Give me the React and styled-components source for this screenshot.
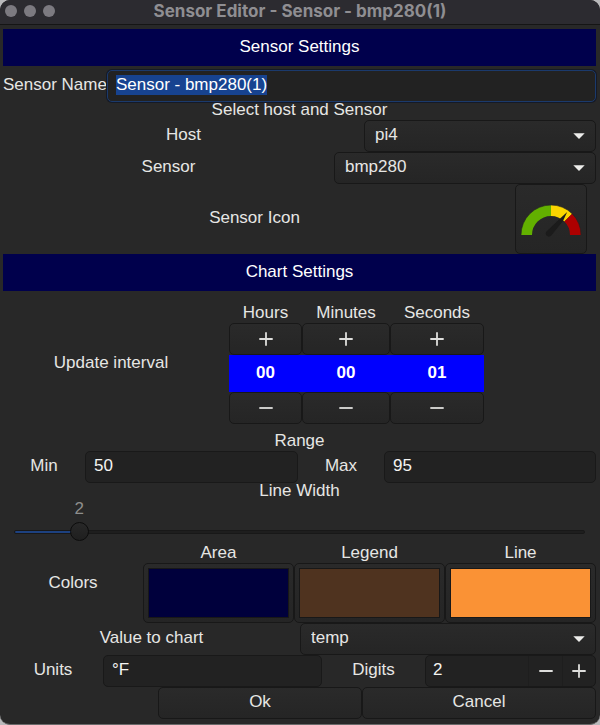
import React, { useEffect, useRef, useState } from "react";
import styled, { createGlobalStyle, css } from "styled-components";

const GlobalStyle = createGlobalStyle`
  *, *::before, *::after { box-sizing: border-box; }
  body { margin: 0; background: #b9b9bb; }
  body, button, input, select, output {
    font-family: "Liberation Sans", Arial, Helvetica, sans-serif;
    font-size: 17px;
    line-height: 18px;
    color: #e6e6e4;
  }
`;

const Window = styled.main`
  display: flex;
  flex-direction: column;
  min-height: 100vh;
  overflow: hidden;
  border-radius: 10px;
  border-bottom: 1px solid #6a6a6a;
  background: #282828;
`;

const TitleBar = styled.header`
  display: grid;
  grid-template-columns: 1fr auto 1fr;
  align-items: center;
  height: 25px;
  padding: 0 5px 3px;
  border-bottom: 1px solid #151515;
  background: #2c2b30;
`;

const Lights = styled.div`
  display: flex;
  gap: 7px;
`;

const Light = styled.button`
  width: 12px;
  height: 12px;
  padding: 0;
  border: 0;
  border-radius: 50%;
  background: #7c7a80;
`;

const Title = styled.h1`
  margin: 0;
  font-family: Inter, sans-serif;
  font-size: 17px;
  font-weight: 700;
  line-height: 20px;
  white-space: nowrap;
  color: #8f8e92;
`;

const Form = styled.form`
  display: flex;
  flex-direction: column;
  padding: 4px 4px 4px 3px;
`;

const Banner = styled.h2`
  margin: 0;
  padding: 9px 0 10px;
  text-align: center;
  font-size: 17px;
  font-weight: 400;
  line-height: 18px;
  color: #fff;
  background: #00004c;
`;

const Row = styled.div`
  display: grid;
  grid-template-columns: ${(p) => p.$columns};
  align-items: center;
  margin-top: ${(p) => p.$gap || 0}px;
`;

const labelText = css`
  padding-bottom: 2px;
  text-align: center;
  white-space: nowrap;
`;

const Label = styled.label`
  ${labelText}
`;

const Caption = styled.div`
  ${labelText}
  line-height: 16px;
  margin-top: ${(p) => p.$gap || 0}px;
`;

const raised = css`
  border: 1px solid #181818;
  border-radius: 5px;
  background: linear-gradient(#2a2a2a, #252525);
`;

const Entry = styled.input`
  width: 100%;
  min-width: 0;
  height: 32px;
  padding: 0 8px 2px;
  border: 1px solid #191919;
  border-radius: 5px;
  outline: 0;
  background: #222;
  color: #f4f4f2;
  &:focus {
    border-color: #1b3a6c;
    box-shadow: 0 0 0 1px #151a26;
  }
  &::selection {
    background: #174390;
    color: #fff;
  }
`;

const SelectBox = styled.div`
  display: grid;
  align-items: center;
  > * { grid-area: 1 / 1; }
  > svg {
    justify-self: end;
    margin-right: 11px;
    pointer-events: none;
  }
`;

const Select = styled.select`
  ${raised}
  appearance: none;
  width: 100%;
  height: 32px;
  padding: 0 32px 2px 10px;
`;

const IconButton = styled.button`
  ${raised}
  display: grid;
  place-items: center;
  justify-self: center;
  width: 72px;
  height: 70px;
  padding: 0;
`;

const Interval = styled.fieldset`
  display: grid;
  grid-template-columns: 216fr 275fr 102fr;
  align-items: center;
  margin: 13px 0 0;
  padding: 0;
  border: 0;
`;

const TimeGrid = styled.div`
  display: grid;
  grid-template-columns: 73fr 88fr 94fr;
  padding: 0 10px;
`;

const TimeColumn = styled.div`
  display: flex;
  flex-direction: column;
  text-align: center;
`;

const TimeLabel = styled.div`
  height: 19px;
`;

const TimeButton = styled.button`
  ${raised}
  display: grid;
  place-items: center;
  height: 32px;
  padding: 0;
`;

const TimeValue = styled.output`
  padding: 9px 0 10px;
  font-weight: 700;
  color: #fff;
  background: #0000fe;
`;

const Scale = styled.div`
  padding: 21px 11px 2px;
`;

const ScaleTrack = styled.div`
  position: relative;
`;

const ScaleValue = styled.output`
  position: absolute;
  bottom: 100%;
  transform: translateX(-50%);
  padding-bottom: 4px;
  color: #8e8e8c;
`;

const Slider = styled.input`
  display: block;
  appearance: none;
  width: 100%;
  height: 20px;
  margin: 0;
  background: transparent;
  &::-webkit-slider-runnable-track {
    height: 4px;
    border: 1px solid #181818;
    border-radius: 2px;
    background: linear-gradient(to right, #1d4180 var(--fill), #1e1e1e var(--fill));
  }
  &::-webkit-slider-thumb {
    appearance: none;
    width: 19px;
    height: 19px;
    margin-top: -9px;
    border: 1px solid #0c0c0c;
    border-radius: 50%;
    background: linear-gradient(#282828, #1f1f1f);
  }
`;

const ColorGrid = styled.div`
  display: grid;
  grid-template-columns: 140fr 151fr 151fr 151fr;
  align-items: center;
`;

const ColorCell = styled.div`
  display: flex;
  flex-direction: column;
  text-align: center;
`;

const ColorLabel = styled.label`
  height: 19px;
`;

const ColorInput = styled.input`
  ${raised}
  appearance: none;
  width: 100%;
  height: 60px;
  padding: 4px;
  &::-webkit-color-swatch-wrapper { padding: 0; }
  &::-webkit-color-swatch { border: 1px solid #181818; border-radius: 0; }
`;

const Spin = styled.div`
  display: grid;
  grid-template-columns: 1fr 34px 33px;
  height: 32px;
  overflow: hidden;
  border: 1px solid #191919;
  border-radius: 5px;
  background: #222;
`;

const SpinInput = styled.input`
  appearance: textfield;
  width: 100%;
  min-width: 0;
  padding: 0 7px 2px;
  border: 0;
  outline: 0;
  background: transparent;
  color: #f4f4f2;
  &::-webkit-inner-spin-button { appearance: none; margin: 0; }
`;

const SpinButton = styled.button`
  display: grid;
  place-items: center;
  padding: 0;
  border: 0;
  border-left: 1px solid #1e1e1e;
  background: transparent;
`;

const Action = styled.button`
  ${raised}
  height: 32px;
  padding: 0 0 2px;
`;

function Sign({ plus }) {
  return (
    <svg width="14" height="14" viewBox="0 0 14 14" stroke="#dededc" strokeWidth="1.8" aria-hidden="true">
      <path d={plus ? "M0.3 7H13.7M7 0.3V13.7" : "M0.3 7H13.7"} />
    </svg>
  );
}

function Gauge() {
  return (
    <svg width="62" height="62" viewBox="0 0 62 62" aria-hidden="true">
      <g fill="none" strokeWidth="11">
        <path d="M6.5 47A24.5 24.5 0 0 1 31 22.5" stroke="#62b000" />
        <path d="M31 22.5A24.5 24.5 0 0 1 48.3 29.7" stroke="#fbd500" />
        <path d="M48.3 29.7A24.5 24.5 0 0 1 55.5 47" stroke="#ad0000" />
      </g>
      <path d="M1 47A30 30 0 0 1 61 47" fill="none" stroke="#222" strokeOpacity="0.6" />
      <path d="M47.2 24 43 33 31.3 47.6A3.2 3.2 0 0 1 26.2 43.8L39 31.5Z" fill="#1b1b1b" />
    </svg>
  );
}

function Dropdown({ id, value }) {
  return (
    <SelectBox>
      <Select id={id} defaultValue={value}>
        <option>{value}</option>
      </Select>
      <svg width="12" height="6" viewBox="0 0 12 6" aria-hidden="true">
        <path d="M0.3 0.3H11.7L6 5.9Z" fill="#ededeb" />
      </svg>
    </SelectBox>
  );
}

function TimeUnit({ label, initial, limit }) {
  const [value, setValue] = useState(initial);
  const step = (n) => setValue((v) => (v + n + limit) % limit);
  return (
    <TimeColumn>
      <TimeLabel>{label}</TimeLabel>
      <TimeButton type="button" aria-label={`Increase ${label}`} onClick={() => step(1)}>
        <Sign plus />
      </TimeButton>
      <TimeValue aria-label={label}>{String(value).padStart(2, "0")}</TimeValue>
      <TimeButton type="button" aria-label={`Decrease ${label}`} onClick={() => step(-1)}>
        <Sign />
      </TimeButton>
    </TimeColumn>
  );
}

function LineWidth() {
  const max = 20;
  const [value, setValue] = useState(2);
  const ratio = value / max;
  const position = `calc(10px + (100% - 19px) * ${ratio})`;
  return (
    <>
      <Caption as="label" htmlFor="line-width">Line Width</Caption>
      <Scale>
        <ScaleTrack>
          <ScaleValue htmlFor="line-width" style={{ left: position }}>{value}</ScaleValue>
          <Slider
            id="line-width"
            type="range"
            min="0"
            max={max}
            value={value}
            onChange={(e) => setValue(Number(e.target.value))}
            style={{ "--fill": `${ratio * 100}%` }}
          />
        </ScaleTrack>
      </Scale>
    </>
  );
}

const colors = [
  { id: "area", label: "Area", value: "#00003c" },
  { id: "legend", label: "Legend", value: "#4f331f" },
  { id: "line", label: "Line", value: "#fa9235" },
];

export default function App() {
  const nameRef = useRef(null);
  const [digits, setDigits] = useState(2);

  useEffect(() => {
    nameRef.current.focus();
    nameRef.current.select();
  }, []);

  return (
    <>
      <GlobalStyle />
      <Window>
        <TitleBar>
          <Lights>
            <Light aria-label="Close" />
            <Light aria-label="Minimize" />
            <Light aria-label="Zoom" />
          </Lights>
          <Title>Sensor Editor - Sensor - bmp280(1)</Title>
        </TitleBar>
        <Form onSubmit={(e) => e.preventDefault()}>
          <Banner>Sensor Settings</Banner>
          <Row $columns="auto 1fr" $gap={4}>
            <Label htmlFor="name">Sensor Name</Label>
            <Entry id="name" ref={nameRef} defaultValue="Sensor - bmp280(1)" />
          </Row>
          <Caption>Select host and Sensor</Caption>
          <Row $columns="361fr 232fr">
            <Label htmlFor="host">Host</Label>
            <Dropdown id="host" value="pi4" />
          </Row>
          <Row $columns="331fr 262fr">
            <Label htmlFor="sensor">Sensor</Label>
            <Dropdown id="sensor" value="bmp280" />
          </Row>
          <Row $columns="503fr 90fr">
            <Label htmlFor="icon">Sensor Icon</Label>
            <IconButton id="icon" type="button"><Gauge /></IconButton>
          </Row>
          <Banner>Chart Settings</Banner>
          <Interval aria-label="Update interval">
            <Label as="div">Update interval</Label>
            <TimeGrid>
              <TimeUnit label="Hours" initial={0} limit={24} />
              <TimeUnit label="Minutes" initial={0} limit={60} />
              <TimeUnit label="Seconds" initial={1} limit={60} />
            </TimeGrid>
          </Interval>
          <Caption $gap={9}>Range</Caption>
          <Row $columns="82fr 213fr 86fr 212fr">
            <Label htmlFor="min">Min</Label>
            <Entry id="min" defaultValue="50" />
            <Label htmlFor="max">Max</Label>
            <Entry id="max" defaultValue="95" />
          </Row>
          <LineWidth />
          <ColorGrid>
            <Label as="div">Colors</Label>
            {colors.map((c) => (
              <ColorCell key={c.id}>
                <ColorLabel htmlFor={c.id}>{c.label}</ColorLabel>
                <ColorInput id={c.id} type="color" defaultValue={c.value} />
              </ColorCell>
            ))}
          </ColorGrid>
          <Row $columns="297fr 296fr">
            <Label htmlFor="value">Value to chart</Label>
            <Dropdown id="value" value="temp" />
          </Row>
          <Row $columns="100fr 219fr 103fr 171fr">
            <Label htmlFor="units">Units</Label>
            <Entry id="units" defaultValue="°F" />
            <Label htmlFor="digits">Digits</Label>
            <Spin>
              <SpinInput
                id="digits"
                type="number"
                value={digits}
                onChange={(e) => setDigits(Number(e.target.value))}
              />
              <SpinButton type="button" aria-label="Fewer digits" onClick={() => setDigits(digits - 1)}>
                <Sign />
              </SpinButton>
              <SpinButton type="button" aria-label="More digits" onClick={() => setDigits(digits + 1)}>
                <Sign plus />
              </SpinButton>
            </Spin>
          </Row>
          <Row $columns="155fr 204fr 234fr">
            <span />
            <Action type="submit">Ok</Action>
            <Action type="button">Cancel</Action>
          </Row>
        </Form>
      </Window>
    </>
  );
}
